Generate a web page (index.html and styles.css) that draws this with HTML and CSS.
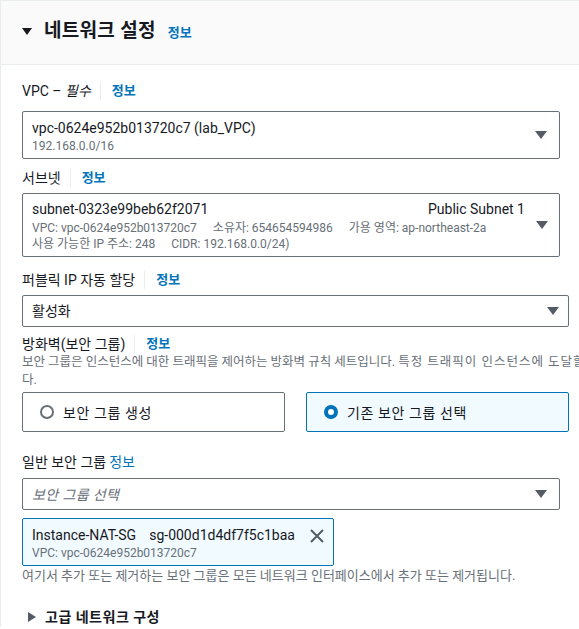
FILE: index.html
```html
<!DOCTYPE html>
<html lang="ko">
<head>
  <meta charset="UTF-8">
  <meta name="viewport" content="width=device-width, initial-scale=1">
  <title>네트워크 설정</title>
  <link rel="stylesheet" href="styles.css">
</head>
<body>

  <div class="panel">
    <div class="panel-header">
      <span class="caret-down"></span>
      <h2>네트워크 설정</h2>
      <a class="info" href="#">정보</a>
    </div>

    <div class="panel-body">
      <!-- VPC -->
      <div class="label label-vpc">
        <span>VPC – <i>필수</i></span>
        <span class="sep"></span>
        <a class="info" href="#">정보</a>
      </div>
      <div class="select select-tall w-narrow">
        <div class="select-text">
          <div class="main">vpc-0624e952b013720c7 (lab_VPC)</div>
          <div class="sub">192.168.0.0/16</div>
        </div>
        <span class="arrow"></span>
      </div>

      <!-- 서브넷 -->
      <div class="label label-subnet">
        <span>서브넷</span>
        <span class="sep"></span>
        <a class="info" href="#">정보</a>
      </div>
      <div class="select select-subnet w-narrow">
        <div class="select-text">
          <div class="main row-split">
            <span>subnet-0323e99beb62f2071</span>
            <span>Public Subnet 1</span>
          </div>
          <div class="sub meta"><span>VPC: vpc-0624e952b013720c7</span><span>소유자: 654654594986</span><span>가용 영역: ap-northeast-2a</span></div>
          <div class="sub meta"><span>사용 가능한 IP 주소: 248</span><span>CIDR: 192.168.0.0/24)</span></div>
        </div>
        <span class="arrow"></span>
      </div>

      <!-- 퍼블릭 IP -->
      <div class="label label-ip">
        <span>퍼블릭 IP 자동 할당</span>
        <span class="sep"></span>
        <a class="info" href="#">정보</a>
      </div>
      <div class="select select-short w-wide">
        <div class="main">활성화</div>
        <span class="arrow"></span>
      </div>

      <!-- 방화벽 -->
      <div class="label label-fw">
        <span>방화벽(보안 그룹)</span>
        <span class="sep"></span>
        <a class="info" href="#">정보</a>
      </div>
      <p class="desc">보안 그룹은 인스턴스에 대한 트래픽을 제어하는 방화벽 규칙 세트입니다. <span class="desc-tail">특정 트래픽이 인스턴스에 도달할 수 있습니</span><br>다.</p>

      <div class="tiles w-wide">
        <label class="tile">
          <span class="radio"></span>
          <span>보안 그룹 생성</span>
        </label>
        <label class="tile tile-on">
          <span class="radio radio-on"></span>
          <span>기존 보안 그룹 선택</span>
        </label>
      </div>

      <!-- 일반 보안 그룹 -->
      <div class="label label-sg">
        <span>일반 보안 그룹</span>
        <a class="info" href="#">정보</a>
      </div>
      <div class="select select-short w-narrow">
        <div class="placeholder">보안 그룹 선택</div>
        <span class="arrow"></span>
      </div>

      <div class="token">
        <div class="token-text">
          <div class="main"><span class="token-name">Instance-NAT-SG</span>sg-000d1d4df7f5c1baa</div>
          <div class="sub">VPC: vpc-0624e952b013720c7</div>
        </div>
        <svg class="dismiss" width="16" height="16" viewBox="0 0 16 16">
          <path d="M2 2 L14 14 M14 2 L2 14" stroke="#545b64" stroke-width="2" fill="none"/>
        </svg>
      </div>
      <p class="hint">여기서 추가 또는 제거하는 보안 그룹은 모든 네트워크 인터페이스에서 추가 또는 제거됩니다.</p>

      <div class="expander">
        <span class="caret-right"></span>
        <span>고급 네트워크 구성</span>
      </div>
    </div>
  </div>

</body>
</html>
```

FILE: styles.css
```css
body {
  margin: 0;
  font-family: Roboto, "Noto Sans CJK KR", sans-serif;
  font-size: 14px;
  color: #16191f;
  background: #fff;
  overflow: hidden;
}
a.info {
  color: #0073bb;
  font-size: 13px;
  font-weight: bold;
  text-decoration: none;
}
.panel {
  border-top: 1px solid #eaeded;
  border-left: 1px solid #eaeded;
}
.panel-header {
  height: 63px;
  background: #fafafa;
  border-bottom: 1px solid #eaeded;
  display: flex;
  align-items: center;
  padding-left: 21px;
}
.panel-header h2 {
  margin: 0 12px 0 0;
  font-size: 19px;
  font-weight: bold;
  line-height: 24px;
  letter-spacing: 0.3px;
  position: relative;
  top: -2px;
}
.panel-header .info {
  position: relative;
  top: -1px;
}
.caret-down {
  width: 0;
  height: 0;
  border-left: 5px solid transparent;
  border-right: 5px solid transparent;
  border-top: 7px solid #16191f;
  margin-right: 12px;
  position: relative;
  top: -1px;
}
.caret-right {
  width: 0;
  height: 0;
  border-top: 5px solid transparent;
  border-bottom: 5px solid transparent;
  border-left: 8px solid #545b64;
  margin-right: 9px;
}
.panel-body {
  padding: 16px 0 0 21px;
}
.label {
  display: flex;
  align-items: center;
  line-height: 20px;
  height: 20px;
}
.label i {
  font-style: italic;
}
.sep {
  width: 1px;
  height: 18px;
  background: #eaeded;
  margin: 0 11px 0 9px;
}
.label-vpc { margin-bottom: 10px; }
.label-subnet { margin-top: 9px; margin-bottom: 5px; }
.label-ip { margin-top: 13px; margin-bottom: 5px; }
.label-fw { margin-top: 8px; height: 18px; }
.label-sg { margin-top: 21px; margin-bottom: 7px; height: 18px; }
.label-sg .info { margin-left: 3px; font-size: 14px; font-weight: normal; }

.w-narrow { width: 538px; }
.w-wide { width: 547px; }

.select {
  box-sizing: border-box;
  border: 1px solid #687078;
  border-radius: 2px;
  display: flex;
  align-items: center;
  position: relative;
  padding: 0 30px 0 9px;
}
.select-tall {
  height: 48px;
  align-items: flex-start;
  padding-top: 7px;
}
.select-subnet {
  height: 64px;
  align-items: flex-start;
  padding-top: 6px;
}
.select-short {
  height: 32px;
}
.select-text {
  flex: 1;
}
.main {
  line-height: 18px;
}
.sub {
  font-size: 12px;
  color: #687078;
  line-height: 18px;
}
.meta {
  line-height: 16px;
}
.select-subnet .main {
  margin-bottom: 2px;
}
.row-split {
  display: flex;
  justify-content: space-between;
  padding-right: 4px;
}
.meta span {
  margin-right: 16px;
}
.placeholder {
  color: #687078;
  font-style: italic;
  letter-spacing: 0.4px;
}
.arrow {
  position: absolute;
  right: 12px;
  top: 50%;
  margin-top: -4px;
  width: 0;
  height: 0;
  border-left: 6px solid transparent;
  border-right: 6px solid transparent;
  border-top: 8px solid #545b64;
}
.w-wide .arrow {
  right: 9px;
}
.select-subnet .arrow {
  right: 11px;
}

.desc, .hint {
  margin: 0;
  font-size: 12.5px;
  line-height: 18px;
  color: #687078;
  white-space: nowrap;
}
.desc-tail {
  letter-spacing: 1px;
}
.hint {
  font-size: 13px;
}
.tiles {
  display: flex;
  gap: 21px;
  margin-top: 3px;
}
.tile {
  flex: 1;
  box-sizing: border-box;
  height: 40px;
  border: 1px solid #687078;
  border-radius: 2px;
  display: flex;
  align-items: center;
  padding-left: 17px;
  gap: 9px;
  letter-spacing: 0.6px;
}
.tile-on {
  background: #f1faff;
  border-color: #0073bb;
}
.radio {
  box-sizing: border-box;
  width: 14px;
  height: 14px;
  border-radius: 50%;
  border: 2px solid #687078;
  background: #fff;
}
.radio-on {
  border: 4px solid #0073bb;
}

.token {
  box-sizing: border-box;
  width: 312px;
  height: 48px;
  margin-top: 8px;
  background: #f1faff;
  border: 1px solid #0073bb;
  border-radius: 2px;
  display: flex;
  align-items: flex-start;
  padding: 7px 8px 0 9px;
}
.token-text {
  flex: 1;
}
.token-name {
  margin-right: 13px;
}
.dismiss {
  margin-top: 2px;
}
.hint {
  margin-top: 1px;
}
.expander {
  display: flex;
  align-items: center;
  margin-top: 22px;
  padding-left: 6px;
  font-weight: bold;
  line-height: 20px;
  color: #16191f;
  letter-spacing: 0.5px;
}
```
